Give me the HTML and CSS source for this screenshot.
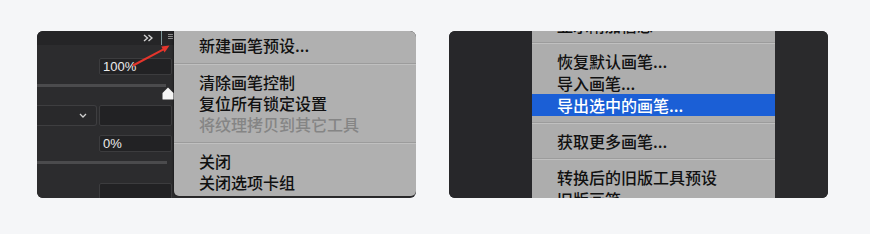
FILE: index.html
```html
<!DOCTYPE html>
<html lang="zh-CN">
<head>
<meta charset="utf-8">
<link rel="stylesheet" href="styles.css">
</head>
<body>
<div class="stage">
  <div class="panel">
    <div class="ps">
      <div class="ps-head">
        <svg class="dbl" width="10" height="8" viewBox="0 0 10 8"><path d="M1 1 L4.5 4 L1 7 M5.5 1 L9 4 L5.5 7" fill="none" stroke="#d2d2d2" stroke-width="1.4"/></svg>
        <span class="vline"></span>
        <svg class="ham" width="5" height="7" viewBox="0 0 5 7"><path d="M0 1.5 H5 M0 3.5 H5 M0 5.5 H5" stroke="#8c8c8c" stroke-width="1"/></svg>
      </div>
      <div class="ps-body">
        <div class="field f1">100%</div>
        <div class="slider">
          <div class="track"></div>
          <svg class="thumb" width="12" height="13" viewBox="0 0 12 13"><path d="M6 0.5 L11.5 6 V12 Q11.5 12.5 11 12.5 H1 Q0.5 12.5 0.5 12 V6 Z" fill="#f4f4f4"/></svg>
        </div>
        <div class="row r2">
          <div class="select"><svg width="8" height="5" viewBox="0 0 8 5"><path d="M1 1 L4 4 L7 1" fill="none" stroke="#d0d0d0" stroke-width="1.3"/></svg></div>
          <div class="field f2"></div>
        </div>
        <div class="field f3">0%</div>
        <div class="track t2"></div>
        <div class="field f4"></div>
      </div>
    </div>
    <div class="menu menu-l">
      <div class="item">新建画笔预设...</div>
      <div class="sep"></div>
      <div class="item">清除画笔控制</div>
      <div class="item">复位所有锁定设置</div>
      <div class="item disabled">将纹理拷贝到其它工具</div>
      <div class="sep"></div>
      <div class="item">关闭</div>
      <div class="item">关闭选项卡组</div>
    </div>
    <svg class="arrow" width="379" height="167" viewBox="0 0 379 167"><path d="M96 34.5 L126.5 18.3" stroke="#e5352c" stroke-width="2" fill="none"/><path d="M132.5 14.5 L127.6 21.6 L124.3 15.4 Z" fill="#e5352c"/></svg>
  </div>

  <div class="panel">
    <div class="dark-l"></div>
    <div class="menu menu-r">
      <div class="list">
        <div class="item ri">显示附加信息</div>
        <div class="sep rs"></div>
        <div class="item ri">恢复默认画笔...</div>
        <div class="item ri">导入画笔...</div>
        <div class="item ri active">导出选中的画笔...</div>
        <div class="sep rs"></div>
        <div class="item ri">获取更多画笔...</div>
        <div class="sep rs"></div>
        <div class="item ri">转换后的旧版工具预设</div>
        <div class="item ri">旧版画笔</div>
      </div>
    </div>
    <div class="dark-r"></div>
  </div>
</div>
</body>
</html>
```

FILE: styles.css
```css
html, body {
  margin: 0;
  padding: 0;
}
body {
  background: #f5f6f8;
  width: 870px;
  height: 234px;
  overflow: hidden;
  font-family: "Noto Sans CJK SC", "Noto Sans", sans-serif;
}
.stage {
  display: flex;
  gap: 33px;
  padding: 31px 0 0 37px;
}
.panel {
  position: relative;
  width: 379px;
  height: 167px;
  border-radius: 6px;
  overflow: hidden;
  display: flex;
  background: #2b2b2d;
}

/* left photoshop panel */
.ps {
  width: 137px;
  display: flex;
  flex-direction: column;
  flex: none;
}
.ps-head {
  height: 21px;
  background: #252527;
  display: flex;
  align-items: flex-start;
  justify-content: flex-end;
  padding-right: 1px;
}
.dbl {
  margin-top: 3px;
  margin-right: 8px;
}
.vline {
  width: 1px;
  height: 14px;
  background: #7d9698;
  margin-right: 6px;
}
.ham {
  margin-top: 2px;
}
.ps-body {
  flex: 1;
  background: #2c2c2e;
  display: flex;
  flex-direction: column;
}
.field {
  box-sizing: border-box;
  width: 73px;
  margin-left: 62px;
  background: #222224;
  border: 1px solid #3c3c3e;
  border-radius: 2px;
  color: #ececec;
  font-family: "Liberation Sans", Arial, sans-serif;
  font-size: 13px;
  padding-left: 3px;
  display: flex;
  align-items: center;
}
.f1 {
  margin-top: 13px;
  height: 17px;
}
.slider {
  position: relative;
  margin-top: 9px;
  height: 3px;
}
.track {
  width: 129px;
  height: 3px;
  background: #4b4b4d;
}
.thumb {
  position: absolute;
  left: 125px;
  top: 3px;
}
.r2 {
  display: flex;
  gap: 2px;
  margin-top: 18px;
  height: 21px;
}
.select {
  box-sizing: border-box;
  width: 60px;
  border: 1px solid #3e3e40;
  border-left: none;
  border-radius: 0 3px 3px 0;
  background: #29292b;
  display: flex;
  align-items: center;
  justify-content: flex-end;
  padding-right: 9px;
}
.f2 {
  margin-left: 0;
  height: 21px;
}
.f3 {
  margin-top: 9px;
  height: 17px;
}
.t2 {
  margin-top: 9px;
  width: 130px;
}
.f4 {
  margin-top: 19px;
  height: 20px;
}

/* menus */
.menu {
  background: #b0b0b0;
  color: #111111;
  font-size: 16px;
  font-weight: 500;
}
.menu-l {
  width: 242px;
  flex: none;
  box-sizing: border-box;
  padding-top: 4px;
  margin-bottom: 2px;
  border-radius: 0 0 5px 5px;
  box-shadow: -1px 0 2px rgba(0, 0, 0, 0.35);
}
.item {
  height: 21px;
  line-height: 21px;
  padding-left: 25px;
  white-space: nowrap;
}
.disabled {
  color: #858585;
}
.sep {
  height: 0;
  border-top: 1px solid #9c9c9c;
  border-bottom: 1px solid #c0c0c0;
  margin: 7px 0;
}
.arrow {
  position: absolute;
  left: 0;
  top: 0;
  pointer-events: none;
}

/* right panel */
.dark-l {
  width: 83px;
  flex: none;
  background: #27272a;
}
.dark-r {
  width: 53px;
  flex: none;
  background: #2a2a2c;
}
.menu-r {
  width: 243px;
  flex: none;
  background: #adadad;
  overflow: hidden;
}
.list {
  margin-top: -17px;
}
.ri {
  height: 22px;
  line-height: 22px;
}
.rs {
  margin: 6px 0;
}
.active {
  background: #1b5fd6;
  color: #ffffff;
}
```
